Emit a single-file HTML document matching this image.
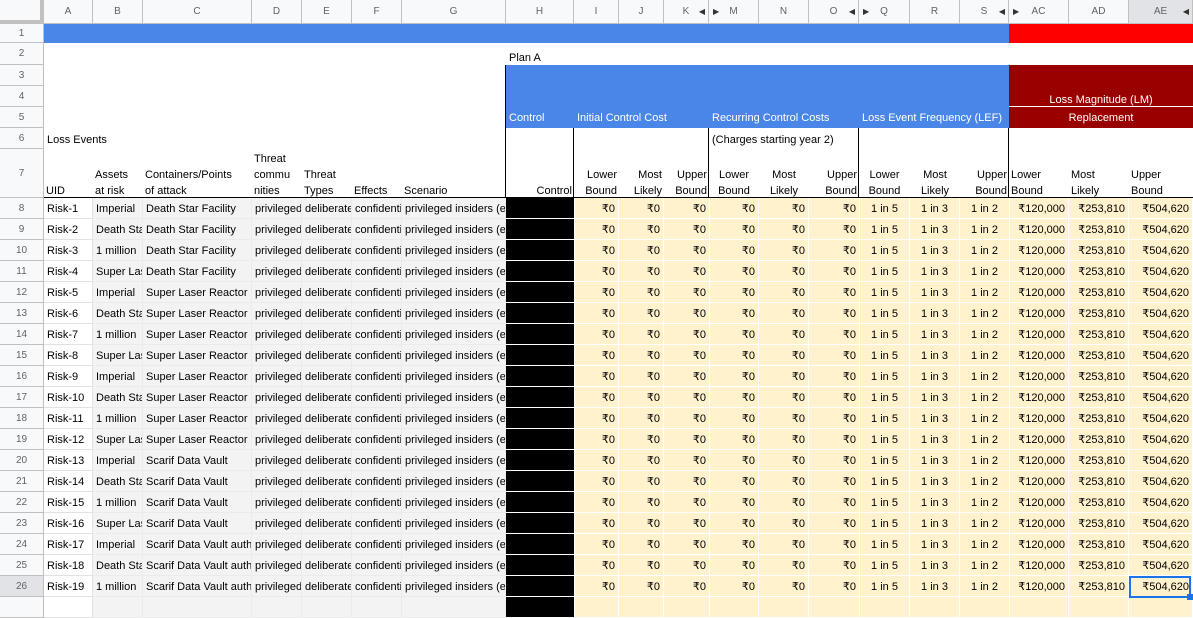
<!DOCTYPE html>
<html><head><meta charset="utf-8">
<style>
*{margin:0;padding:0;box-sizing:border-box}
body{width:1193px;height:601px;overflow:hidden;background:#fff;font-family:"Liberation Sans",Arial,sans-serif;font-size:11px;color:#000;position:relative}
.c{position:absolute;overflow:hidden;white-space:nowrap;line-height:21px;padding:0 3px}
.hd{position:absolute;background:#f8f9fa;color:#5f6368;font-size:10px;text-align:center;border-right:1px solid #c0c0c0;border-bottom:1px solid #c0c0c0;line-height:23px}
.rh{position:absolute;left:0;width:44px;background:#f8f9fa;color:#5f6368;font-size:10px;text-align:center;border-right:1px solid #c0c0c0;border-bottom:1px solid #c0c0c0}
.w{color:#fff}
.r{text-align:right}.ct{text-align:center}
.ml{position:absolute;white-space:pre;line-height:16px;overflow:hidden;padding:0 2px}
</style></head><body>
<div id="g"></div>
<script>
var X=[44,93,143,252,302,352,402,506,574,619,664,709,759,809,859,910,960,1009,1069,1129,1193];
var L=["A","B","C","D","E","F","G","H","I","J","K","M","N","O","Q","R","S","AC","AD","AE"];
var h="";
function box(x,y,w,hh,st,txt,cls){h+='<div class="'+(cls||"c")+'" style="left:'+x+'px;top:'+y+'px;width:'+w+'px;height:'+hh+'px;'+st+'">'+(txt||"")+'</div>';}
box(0,0,44,24,"background:#f8f9fa;border-right:4px solid #c0c0c0;border-bottom:4px solid #c0c0c0","", "hd");
for(var i=0;i<20;i++){var t=L[i];
 if(t=="K"||t=="O"||t=="S"||t=="AE")t=t+'<span style="position:absolute;right:3px;font-size:8px;color:#333">◀</span>';
 if(L[i]=="M"||L[i]=="Q"||L[i]=="AC")t='<span style="position:absolute;left:4px;font-size:8px;color:#333">▶</span>'+t;
 box(X[i],0,X[i+1]-X[i],24,(L[i]=="AE"?"background:#e1e3e6;":"")+"position:absolute",t,"hd");}
var RY={1:[24,19],2:[43,22],3:[65,21],4:[86,21],5:[107,21],6:[128,21],7:[149,49]};
for(var r=8;r<=27;r++)RY[r]=[198+(r-8)*21,21];
for(var r=1;r<=27;r++){var y=RY[r][0],hh=RY[r][1];
 h+='<div class="rh" style="top:'+y+'px;height:'+hh+'px;line-height:'+hh+'px;'+(r==26?'background:#e1e3e6;':'')+'">'+(r<27?r:'')+'</div>';}
box(44,24,965,19,"background:#4a86e8");
box(1009,24,184,19,"background:#f00");
box(506,43,100,22,"line-height:30px","Plan A");
box(506,65,503,63,"background:#4a86e8");
box(1009,65,184,63,"background:#990000");
box(1009,106,184,1,"background:#fff");
box(506,107,70,21,"line-height:23px","Control","c w");
box(574,107,140,21,"line-height:23px","Initial Control Cost","c w");
box(709,107,150,21,"line-height:23px","Recurring Control Costs","c w");
box(859,107,150,21,"line-height:23px","Loss Event Frequency (LEF)","c w");
box(1009,86,184,21,"line-height:28px","Loss Magnitude (LM)","c w ct");
box(1009,107,184,21,"line-height:23px","Replacement","c w ct");
box(44,128,100,21,"line-height:24px","Loss Events");
box(709,128,150,21,"line-height:24px","(Charges starting year 2)");
var h7=[["UID","l"],["Assets\nat risk","l"],["Containers/Points\nof attack","l"],["Threat\ncommu\nnities","l"],["Threat\nTypes","l"],["Effects","l"],["Scenario","l"],["Control","r"],
["Lower\nBound","r"],["Most\nLikely","r"],["Upper\nBound","r"],["Lower\nBound","c"],["Most\nLikely","c"],["Upper\nBound","r"],["Lower\nBound","c"],["Most\nLikely","c"],["Upper\nBound","r"],["Lower\nBound","l"],["Most\nLikely","l"],["Upper\nBound","l"]];
for(var i=0;i<20;i++){var n=h7[i][0].split("\n").length;var al=h7[i][1]=="r"?"right":h7[i][1]=="c"?"center":"left";
 h+='<div class="ml" style="left:'+X[i]+'px;top:'+(198-n*16+1)+'px;width:'+(X[i+1]-X[i])+'px;height:'+(n*16)+'px;text-align:'+al+'">'+h7[i][0].replace(/\n/g,"<br>")+'</div>';}
box(44,197,1149,1,"background:#000;padding:0");
box(505,65,1,536,"background:#000;padding:0");
box(573,128,1,473,"background:#000;padding:0");
box(708,128,1,473,"background:#000;padding:0");
box(858,128,1,473,"background:#000;padding:0");
box(1008,128,1,473,"background:#000;padding:0");
var B=["Imperial","Death Star","1 million","Super Laser"];
for(var k=0;k<20;k++){var r=8+k,y=RY[r][0];var n=k+1;
 var C=k<4?"Death Star Facility":k<12?"Super Laser Reactor":k<16?"Scarif Data Vault":"Scarif Data Vault auth";
 var last=k==19;
 var vals=last?["","","","","","","","","","","","","","","","","","","",""]:["Risk-"+n,B[k%4],C,"privileged","deliberate","confidential","privileged insiders (employees)","","₹0","₹0","₹0","₹0","₹0","₹0","1 in 5","1 in 3","1 in 2","₹120,000","₹253,810","₹504,620"];
 for(var i=0;i<20;i++){var w=X[i+1]-X[i];var st="border-right:1px solid #e2e2e2;border-bottom:1px solid #e2e2e2;";var cls="c";
  if(i==0)st+="background:#fff;padding-left:3px;";
  else if(i<7)st+="background:#f3f3f3;border-color:#ebebeb;";
  else if(i==7)st="background:#000;border-bottom:1px solid #fff;";
  else {st="background:#fff2cc;border-right:1px solid #fff;border-bottom:1px solid #fff;";cls=(i>=14&&i<=16)?"c ct":"c r";}
  if(i==7||i==10||i==13||i==16)st+="border-right:none;";
  if(i>=17)cls="c r";
  var off=(i==8||i==11||i==14||i==17)?1:0;
  box(X[i]+off,y,w-off,21,st+"line-height:22px;",vals[i],cls);}
}
box(1129,576,62,22,"border:2px solid #1a73e8;background:transparent");
box(1187,594,6,6,"background:#1a73e8;padding:0");
document.getElementById("g").innerHTML=h;
</script>
</body></html>
